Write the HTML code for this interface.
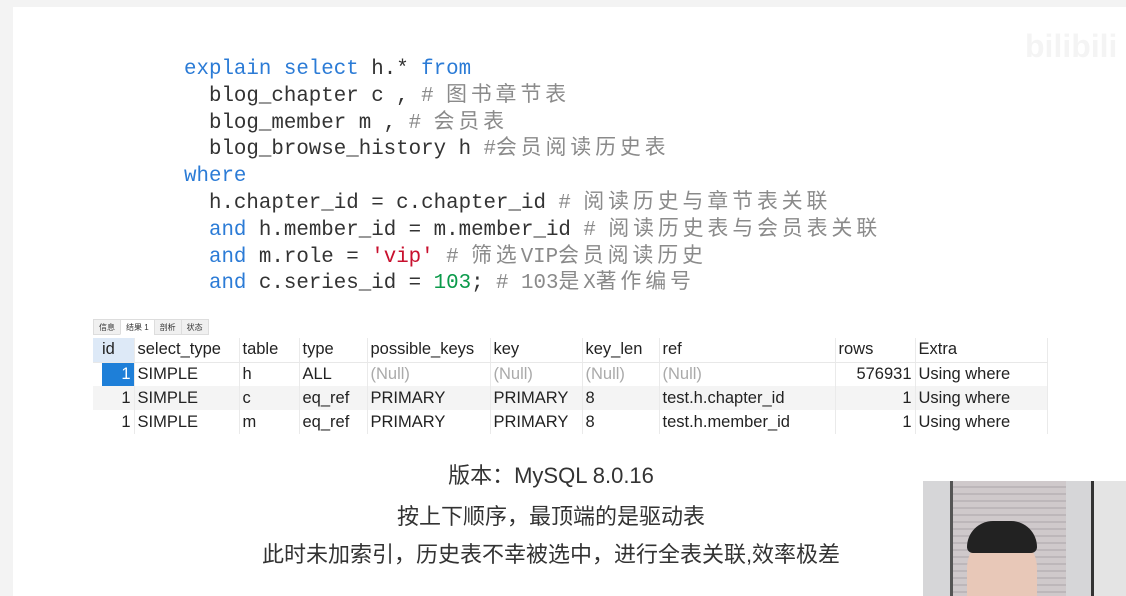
<!DOCTYPE html>
<html><head><meta charset="utf-8"><style>
*{margin:0;padding:0;box-sizing:border-box}
body{width:1126px;height:596px;background:#f3f3f3;position:relative;overflow:hidden;font-family:"Liberation Sans","Noto Sans CJK SC",sans-serif}
.panel{position:absolute;left:13px;top:7px;width:1113px;height:589px;background:#fff}
.code{position:absolute;left:184px;top:57px;font-family:"Liberation Mono","Noto Sans CJK SC",monospace;font-size:20.8px;line-height:26.8px;color:#333;white-space:pre}
.k{color:#2b7bd6}.s{color:#c8102e}.n{color:#0a9a4a}.c{color:#8a8a8a}
.z{letter-spacing:4px}
.tabs{position:absolute;left:93px;top:319px;height:16px;font-size:8px;color:#333}
.tabs span{display:inline-block;height:16px;line-height:15px;padding:0 5px;background:#f0f0f0;border:1px solid #ddd;margin-right:-1px}
.tabs span.a{background:#fff;border-bottom-color:#fff}
table{position:absolute;left:93px;top:338px;border-collapse:collapse;font-size:16.5px;color:#222}
td{height:24px;padding:0 0 0 3px;white-space:nowrap;border-right:1px solid #eaeaea}
tr.h td{background:#fff;border-bottom:1px solid #e8e8e8}
tr.g td{background:#f4f4f4}
.nl{color:#aaa}
.r{text-align:right;padding-right:3px}
.cap{position:absolute;left:0;width:1102px;text-align:center;font-size:22px;color:#333}
.cam{position:absolute;left:923px;top:481px;width:203px;height:115px;background:#d6d6d8;overflow:hidden}
</style></head><body>
<div class="panel"></div>
<div style="position:absolute;left:1025px;top:28px;font-size:32px;font-weight:bold;color:#f4f4f4">bilibili</div>
<div class="code"><span class="k">explain</span> <span class="k">select</span> h.* <span class="k">from</span>
  blog_chapter c , <span class="c"># <span class="z">图书章节表</span></span>
  blog_member m , <span class="c"># <span class="z">会员表</span></span>
  blog_browse_history h <span class="c">#<span class="z">会员阅读历史表</span></span>
<span class="k">where</span>
  h.chapter_id = c.chapter_id <span class="c"># <span class="z">阅读历史与章节表关联</span></span>
  <span class="k">and</span> h.member_id = m.member_id <span class="c"># <span class="z">阅读历史表与会员表关联</span></span>
  <span class="k">and</span> m.role = <span class="s">'vip'</span> <span class="c"># <span class="z">筛选</span>VIP<span class="z">会员阅读历史</span></span>
  <span class="k">and</span> c.series_id = <span class="n">103</span>; <span class="c"># 103<span class="z">是</span>X<span class="z">著作编号</span></span></div>
<div class="tabs"><span>信息</span><span class="a">结果 1</span><span>剖析</span><span>状态</span></div>
<table>
<colgroup><col style="width:41px"><col style="width:105px"><col style="width:60px"><col style="width:68px"><col style="width:123px"><col style="width:92px"><col style="width:77px"><col style="width:176px"><col style="width:80px"><col style="width:132px"></colgroup>
<tr class="h"><td style="background:#dde9f7;padding-left:9px">id</td><td>select_type</td><td>table</td><td>type</td><td>possible_keys</td><td>key</td><td>key_len</td><td>ref</td><td>rows</td><td>Extra</td></tr>
<tr><td class="r" style="background:linear-gradient(90deg,#fff 9px,#1e7fd8 9px);color:#fff">1</td><td>SIMPLE</td><td>h</td><td>ALL</td><td class="nl">(Null)</td><td class="nl">(Null)</td><td class="nl">(Null)</td><td class="nl">(Null)</td><td class="r">576931</td><td>Using where</td></tr>
<tr class="g"><td class="r">1</td><td>SIMPLE</td><td>c</td><td>eq_ref</td><td>PRIMARY</td><td>PRIMARY</td><td>8</td><td>test.h.chapter_id</td><td class="r">1</td><td>Using where</td></tr>
<tr><td class="r">1</td><td>SIMPLE</td><td>m</td><td>eq_ref</td><td>PRIMARY</td><td>PRIMARY</td><td>8</td><td>test.h.member_id</td><td class="r">1</td><td>Using where</td></tr>
</table>
<div class="cap" style="top:458px">版本：MySQL 8.0.16</div>
<div class="cap" style="top:499px">按上下顺序，最顶端的是驱动表</div>
<div class="cap" style="top:537px">此时未加索引，历史表不幸被选中，进行全表关联,效率极差</div>
<div class="cam">
<div style="position:absolute;left:29px;top:0;width:114px;height:115px;background:repeating-linear-gradient(#cfc9cb 0 5px,#bdb7ba 5px 7px)"></div>
<div style="position:absolute;left:27px;top:0;width:3px;height:115px;background:#555"></div>
<div style="position:absolute;left:168px;top:0;width:35px;height:115px;background:#e4e4e4;border-left:3px solid #333"></div>
<div style="position:absolute;left:44px;top:52px;width:70px;height:63px;border-radius:35px 35px 0 0;background:#e8c8b8"></div>
<div style="position:absolute;left:44px;top:40px;width:70px;height:32px;border-radius:35px 35px 8px 8px;background:#222"></div>
</div>
</body></html>
